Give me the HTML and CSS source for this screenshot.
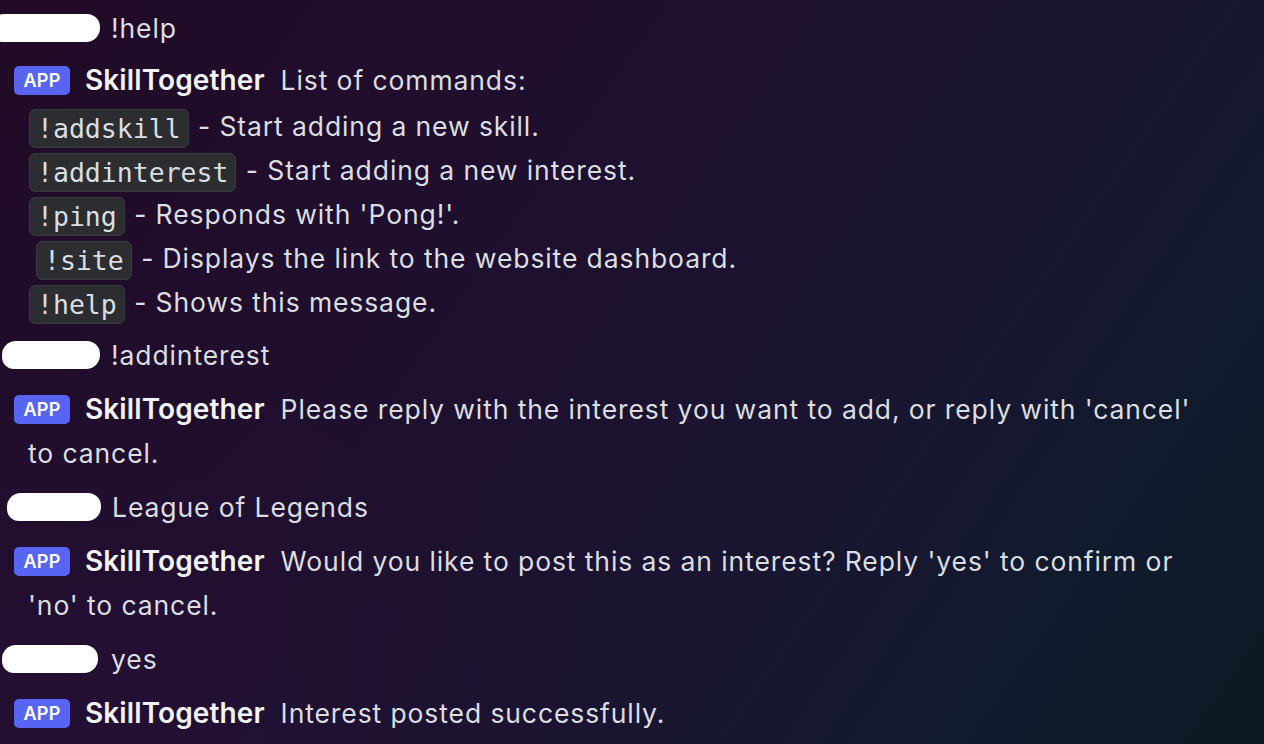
FILE: index.html
```html
<!DOCTYPE html>
<html lang="en">
<head>
<meta charset="utf-8">
<title>SkillTogether chat</title>
<link rel="stylesheet" href="styles.css">
</head>
<body>
<main class="chat">
  <div class="msg user">
    <span class="blob blob-a"></span>
    <span class="text">!help</span>
  </div>

  <div class="msg bot bot-first">
    <div class="line"><span class="badge">APP</span><span class="name">SkillTogether</span>List of commands:</div>
    <div class="cmds">
      <div class="cmd"><code class="chip">!addskill</code> - Start adding a new skill.</div>
      <div class="cmd"><code class="chip">!addinterest</code> - Start adding a new interest.</div>
      <div class="cmd"><code class="chip">!ping</code> - Responds with 'Pong!'.</div>
      <div class="cmd"><code class="chip chip-indent">!site</code> - Displays the link to the website dashboard.</div>
      <div class="cmd"><code class="chip">!help</code> - Shows this message.</div>
    </div>
  </div>

  <div class="msg user user-tight">
    <span class="blob blob-b"></span>
    <span class="text">!addinterest</span>
  </div>

  <div class="msg bot">
    <div class="line"><span class="badge">APP</span><span class="name">SkillTogether</span>Please reply with the interest you want to add, or reply with 'cancel'<br>to cancel.</div>
  </div>

  <div class="msg user">
    <span class="blob blob-c"></span>
    <span class="text">League of Legends</span>
  </div>

  <div class="msg bot">
    <div class="line"><span class="badge">APP</span><span class="name">SkillTogether</span>Would you like to post this as an interest? Reply 'yes' to confirm or<br>'no' to cancel.</div>
  </div>

  <div class="msg user">
    <span class="blob blob-d"></span>
    <span class="text">yes</span>
  </div>

  <div class="msg bot">
    <div class="line"><span class="badge">APP</span><span class="name">SkillTogether</span>Interest posted successfully.</div>
  </div>
</main>
</body>
</html>
```

FILE: styles.css
```css
* { box-sizing: border-box; }

html, body {
  margin: 0;
  height: 100%;
}

body {
  width: 1264px;
  height: 744px;
  overflow: hidden;
  background:
    radial-gradient(ellipse 900px 600px at 0% 100%, rgba(40, 16, 56, 0.55), rgba(40, 16, 56, 0) 70%),
    linear-gradient(125deg, #210a26 0%, #1f0f2e 35%, #1a1430 60%, #121a2e 82%, #0b1a24 100%);
  color: #dbdee1;
  font-family: "Inter", "Noto Sans", sans-serif;
  font-size: 26.5px;
  letter-spacing: 0.9px;
}

.chat {
  padding-top: 6px;
}

.msg {
  margin-top: 10px;
}
.msg:first-child { margin-top: 0; }
.bot-first { margin-top: 8px; }
.user-tight { margin-top: 9px; }

.user {
  display: flex;
  align-items: center;
  height: 44px;
  gap: 11px;
}

.blob {
  display: block;
  height: 28px;
  background: #ffffff;
  border-radius: 14px 13px 14px 12px;
}
.blob-a { width: 110px; margin-left: -10px; }
.blob-b { width: 98px; margin-left: 2px; }
.blob-c { width: 94px; margin-left: 7px; }
.blob-d { width: 96px; margin-left: 2px; margin-right: 2px; }

.text {
  line-height: 44px;
}

.bot .line {
  line-height: 44px;
  padding-left: 28px;
  text-indent: -14px;
}

.badge {
  display: inline-block;
  text-indent: 0;
  width: 56px;
  height: 29px;
  line-height: 29px;
  border-radius: 5px;
  background: #5865f2;
  color: #ffffff;
  font-size: 18px;
  font-weight: 600;
  text-align: center;
  vertical-align: middle;
  margin-right: 15px;
  letter-spacing: 0.3px;
  position: relative;
  top: -2px;
}

.name {
  color: #f2f3f5;
  font-weight: 600;
  font-size: 28px;
  line-height: 1;
  margin-right: 16px;
  letter-spacing: 0.1px;
}

.cmds {
  margin-top: 2px;
  padding-left: 28px;
}

.cmd {
  height: 44px;
  line-height: 44px;
}

.chip {
  display: inline-block;
  height: 39px;
  line-height: 37px;
  padding: 0 7px;
  margin-left: 1px;
  margin-right: 1px;
  background: #2b2d31;
  border: 1px solid #383a40;
  border-radius: 6px;
  font-family: "DejaVu Sans Mono", "Liberation Mono", monospace;
  font-size: 26.5px;
  letter-spacing: 0;
  color: #dbdee1;
  vertical-align: middle;
}

.chip-indent { margin-left: 8px; }
```
